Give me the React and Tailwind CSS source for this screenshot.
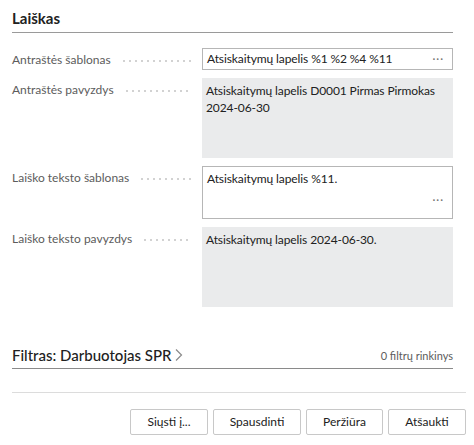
import React from "react";

const Field = ({ label, children }) => (
  <div className="flex items-start">
    <div className="flex w-[190px] shrink-0 items-center pt-[4px] pr-[11px]">
      <span className="whitespace-nowrap text-[12px] leading-[16px] text-[#5c5c5c]">{label}</span>
      <span className="ml-[10px] mt-[2px] h-[2px] flex-1 bg-[radial-gradient(circle,#d2d2d2_0.8px,transparent_1px)] bg-[length:6px_2px] bg-repeat-x" />
    </div>
    <div className="flex-1">{children}</div>
  </div>
);

const Btn = ({ children, w }) => (
  <button className={`h-[26px] ${w} rounded-[2px] border border-[#c8c8c8] bg-white text-[12px] text-[#212121]`}>
    {children}
  </button>
);

const App = () => {
  return (
    <div className="h-[445px] w-[474px] bg-white font-['Lato','Noto_Sans',sans-serif] text-[#212121]">
      <div className="pl-[12px] pr-[21px] pt-[8px]">
        <h2 className="border-b border-[#9a9a9a] pb-[4px] text-[15px] font-bold leading-[20px]">Laiškas</h2>

        <div className="mt-[15px] flex flex-col gap-[8px]">
          <Field label="Antraštės šablonas">
            <div className="flex h-[22px] items-center border border-[#b6b6b6] pl-[4px] pr-[8px] text-[12px] tracking-[-0.1px]">
              <span className="flex-1">Atsiskaitymų lapelis %1 %2 %4 %11</span>
              <span className="text-[11px] tracking-[1px] text-[#707070]">···</span>
            </div>
          </Field>
          <Field label="Antraštės pavyzdys">
            <div className="h-[80px] bg-[#eaebec] px-[4px] pt-[4px] text-[12px] leading-[17px] tracking-[-0.1px]">
              Atsiskaitymų lapelis D0001 Pirmas Pirmokas
              <br />
              2024-06-30
            </div>
          </Field>
          <Field label="Laiško teksto šablonas">
            <div className="flex h-[53px] flex-col border border-[#b6b6b6] pl-[4px] pr-[8px] pt-[3px] text-[12px] tracking-[-0.1px]">
              <span>Atsiskaitymų lapelis %11.</span>
              <span className="mt-[4px] self-end text-[11px] tracking-[1px] text-[#707070]">···</span>
            </div>
          </Field>
          <Field label="Laiško teksto pavyzdys">
            <div className="h-[80px] bg-[#eaebec] px-[4px] pt-[4px] text-[12px] leading-[17px] tracking-[-0.1px]">
              Atsiskaitymų lapelis 2024-06-30.
            </div>
          </Field>
        </div>

        <div className="mt-[38px] flex items-end border-b border-[#8a8a8a] pb-[3px]">
          <span className="text-[15px] font-medium leading-[20px]">Filtras: Darbuotojas SPR</span>
          <svg width="10" height="14" viewBox="0 0 10 14" className="mb-[3px] ml-[2px]">
            <path d="M2 1.5 L7.5 7 L2 12.5" fill="none" stroke="#8a8a8a" strokeWidth="1.2" />
          </svg>
          <span className="ml-auto pb-[1px] text-[11px] text-[#5c5c5c]">0 filtrų rinkinys</span>
        </div>
      </div>

      <div className="ml-[12px] mr-[8px] mt-[23px] border-t border-[#dcdcdc]" />

      <div className="mr-[8px] mt-[16px] flex justify-end gap-[5px]">
        <Btn w="w-[78px]">Siųsti į...</Btn>
        <Btn w="w-[88px]">Spausdinti</Btn>
        <Btn w="w-[77px]">Peržiūra</Btn>
        <Btn w="w-[78px]">Atšaukti</Btn>
      </div>
    </div>
  );
};

export default App;
